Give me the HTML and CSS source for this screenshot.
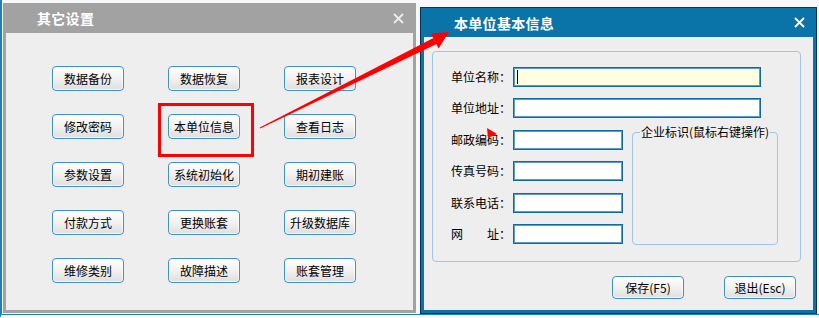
FILE: index.html
```html
<!DOCTYPE html>
<html lang="zh-CN">
<head>
    <meta charset="UTF-8">
    <title>本单位信息</title>
    <link rel="stylesheet" href="styles.css">
</head>
<body>
    <div class="desk">
        <!-- 其它设置 -->
        <div class="win gray">
            <div class="bar">
                <span class="title">其它设置</span>
                <svg class="close" width="11" height="11" viewBox="0 0 11 11"><path d="M1 1L10 10M10 1L1 10" stroke="#ececec" stroke-width="1.8"/></svg>
            </div>
            <div class="body">
                <div class="grid">
                    <span class="btn">数据备份</span>
                    <span class="btn">数据恢复</span>
                    <span class="btn">报表设计</span>
                    <span class="btn">修改密码</span>
                    <span class="btn">本单位信息</span>
                    <span class="btn">查看日志</span>
                    <span class="btn">参数设置</span>
                    <span class="btn">系统初始化</span>
                    <span class="btn">期初建账</span>
                    <span class="btn">付款方式</span>
                    <span class="btn">更换账套</span>
                    <span class="btn">升级数据库</span>
                    <span class="btn">维修类别</span>
                    <span class="btn">故障描述</span>
                    <span class="btn">账套管理</span>
                </div>
                <div class="mark"></div>
            </div>
        </div>

        <!-- 本单位基本信息 -->
        <div class="win blue">
            <div class="bar">
                <span class="title">本单位基本信息</span>
                <svg class="close" width="11" height="11" viewBox="0 0 11 11"><path d="M1 1L10 10M10 1L1 10" stroke="#fff" stroke-width="1.8"/></svg>
            </div>
            <div class="body">
                <div class="group">
                    <div class="form">
                        <span class="lbl">单位名称：</span>
                        <div class="field wide active"><span class="caret"></span></div>
                        <span class="lbl">单位地址：</span>
                        <div class="field wide"></div>
                        <span class="lbl">邮政编码：</span>
                        <div class="field"></div>
                        <div class="logo"><span class="legend">企业标识(鼠标右键操作)</span></div>
                        <span class="lbl">传真号码：</span>
                        <div class="field"></div>
                        <span class="lbl">联系电话：</span>
                        <div class="field"></div>
                        <span class="lbl">网&emsp;&emsp;址：</span>
                        <div class="field"></div>
                    </div>
                </div>
                <div class="actions">
                    <span class="btn">保存(F5)</span>
                    <span class="btn">退出(Esc)</span>
                </div>
            </div>
        </div>

        <svg class="arrow" width="819" height="318" viewBox="0 0 819 318">
            <polygon points="260.2,128.4 259.8,127.6 433.4,37.9 436.6,44.1" fill="#f00"/>
            <polygon points="438.6,48.6 430.9,33.6 449,32" fill="#f00"/>
            <polygon points="487,128 497,134 488,138" fill="#f00"/>
        </svg>
    </div>
</body>
</html>
```

FILE: styles.css
```css
* {
    margin: 0;
    padding: 0;
    box-sizing: border-box;
}
body {
    width: 819px;
    height: 318px;
    overflow: hidden;
    background: #f6f8fa;
    font-family: "Noto Sans CJK SC", "Noto Sans", sans-serif;
    font-size: 12px;
    color: #000;
}
.desk {
    position: relative;
    width: 819px;
    height: 318px;
    border-left: 2px solid #1d80b6;
    border-bottom: 4px solid #fff;
}
.desk::after {
    content: "";
    position: absolute;
    left: 0;
    right: 0;
    bottom: -1px;
    border-top: 1px solid #1d80b6;
}

.win {
    position: absolute;
    display: flex;
    flex-direction: column;
}
.bar {
    display: flex;
    align-items: center;
    justify-content: space-between;
    padding: 0 12px 0 34px;
    flex: none;
}
.title {
    color: #fff;
    font-size: 14px;
    font-weight: bold;
    letter-spacing: 0.3px;
}
.close {
    display: block;
}
.body {
    flex: 1;
    background: #eeeeee;
    position: relative;
}

.gray {
    left: 1px;
    top: 3px;
    width: 413px;
    height: 310px;
    background: #a2a2a2;
}
.gray .bar {
    height: 30px;
}
.gray .body {
    margin: 0 3px 3px;
    padding: 33px 0 0 46px;
}
.grid {
    display: grid;
    grid-template-columns: repeat(3, 72px);
    grid-auto-rows: 25px;
    column-gap: 44px;
    row-gap: 23px;
}
.btn {
    display: flex;
    align-items: center;
    justify-content: center;
    height: 25px;
    border: 1px solid #3f92c6;
    border-radius: 4px;
    background: linear-gradient(#fefefe, #f3f3f3 45%, #dedede);
    box-shadow: inset 0 0 0 1px rgba(255,255,255,0.7);
    font-size: 12px;
    white-space: nowrap;
}
.mark {
    position: absolute;
    left: 152px;
    top: 70px;
    width: 96px;
    height: 54px;
    border: 3px solid #f00;
}

.blue {
    left: 418px;
    top: 7px;
    width: 397px;
    height: 307px;
    background: #0a74a9;
    border: 1px solid #06325e;
}
.blue .bar {
    height: 29px;
    padding: 0 11px 0 33px;
}
.blue .body {
    margin: 0 3px 3px;
    padding: 14px 12px 0 8px;
}
.group {
    height: 211px;
    border: 1px solid #9fc4e9;
    border-radius: 4px;
    padding: 15px 0 0 18px;
}
.form {
    display: grid;
    grid-template-columns: 62px 110px 9px 146px;
    grid-template-rows: repeat(6, 20px);
    row-gap: 11.4px;
    align-items: center;
}
.lbl {
    grid-column: 1;
    white-space: nowrap;
    line-height: 14px;
}
.field {
    height: 20px;
    width: 110px;
    background: #fff;
    border: 1px solid #0b6aa2;
    box-shadow: inset 0 0 0 1px #5a9ecb;
    display: flex;
    align-items: center;
}
.field.wide {
    grid-column: 2 / 5;
    width: 248px;
}
.field.active {
    background: #ffffe1;
}
.caret {
    width: 1px;
    height: 14px;
    margin-left: 3px;
    background: #000;
}
.logo {
    grid-column: 4;
    grid-row: 3 / 7;
    align-self: stretch;
    margin: 2px 0 -1px;
    border: 1px solid #9fc4e9;
    border-radius: 4px;
    position: relative;
}
.legend {
    position: absolute;
    left: 7px;
    top: -8px;
    padding: 0 1px;
    background: #eeeeee;
    line-height: 14px;
    white-space: nowrap;
}
.actions {
    display: flex;
    justify-content: flex-end;
    gap: 40px;
    margin: 14px 5px 0 0;
}
.actions .btn {
    width: 72px;
    height: 23px;
}

.arrow {
    position: absolute;
    left: -2px;
    top: 0;
    pointer-events: none;
}
```
